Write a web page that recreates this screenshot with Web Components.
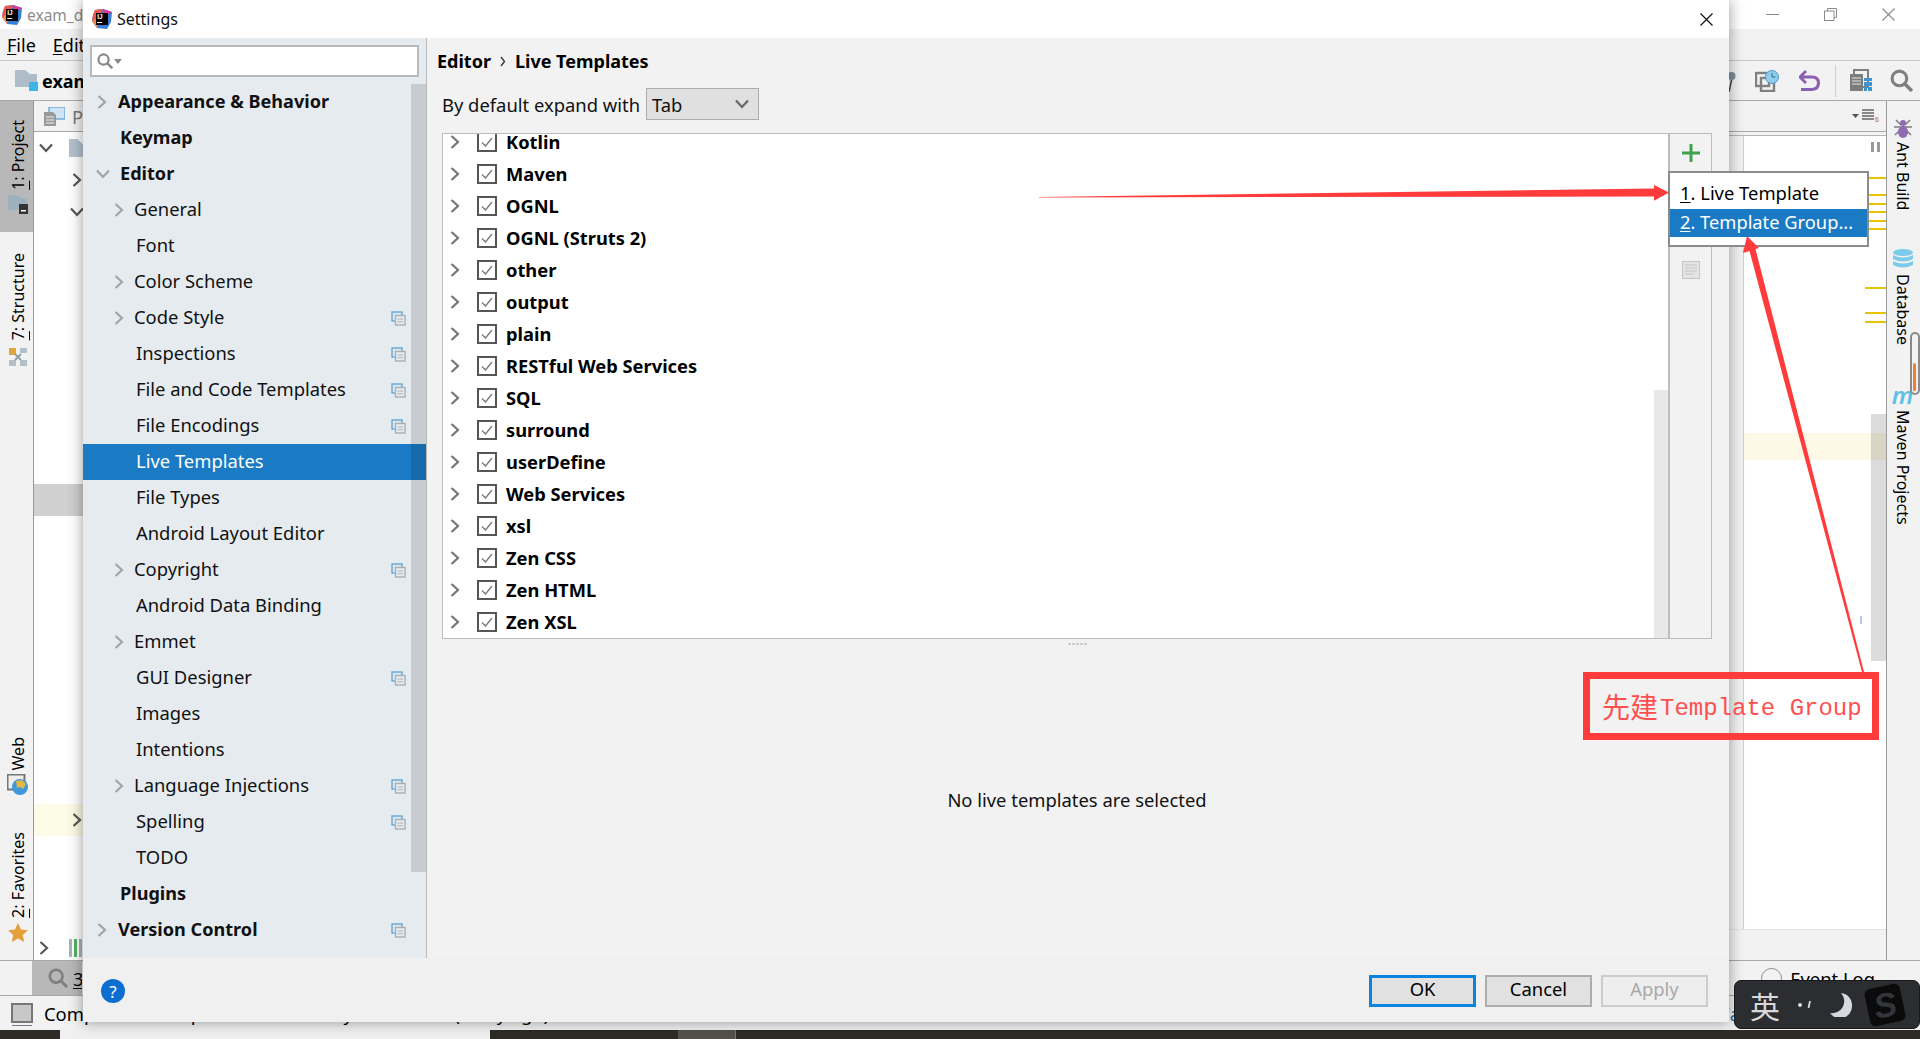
<!DOCTYPE html>
<html lang="en">
<head>
<meta charset="utf-8">
<title>Settings</title>
<style>
  html, body { margin: 0; height: 100%; overflow: hidden; background: #f2f2f2; }
  body { position: relative; width: 1920px; height: 1039px; font: 18.4px "Noto Sans", "Noto Sans CJK SC", sans-serif; color: #111; }
</style>
</head>
<body>
<ij-frame></ij-frame>
<ij-dialog></ij-dialog>
<ij-popup></ij-popup>
<ij-ime></ij-ime>
<ij-note></ij-note>

<script>
// Shared icons
const chevron = '<svg width="10" height="14" viewBox="0 0 10 14"><path d="M1.5 1L8 7L1.5 13" fill="none" stroke="currentColor" stroke-width="2.2"/></svg>';
const chevronDown = '<svg width="14" height="10" viewBox="0 0 14 10"><path d="M1 1.5L7 8L13 1.5" fill="none" stroke="currentColor" stroke-width="2.2"/></svg>';
const logo = size => `<svg width="${size}" height="${size}" viewBox="0 0 20 20">
  <path d="M3 1L11 0L20 3L19 13L15 20L5 19L0 12L1 6Z" fill="#3a7fd6"/>
  <path d="M3 1L11 0L9 7L0 12L1 6Z" fill="#f0564f"/><path d="M0 12L9 7L5 19Z" fill="#f08a3c"/>
  <path d="M11 0L20 3L12 8Z" fill="#d8399c"/>
  <rect x="4" y="4" width="12" height="12" fill="#000"/>
  <text x="5.2" y="10.4" font-size="6.5" font-weight="700" font-family="Liberation Sans" fill="#fff">IJ</text>
  <rect x="5.2" y="13" width="5" height="1" fill="#fff"/></svg>`;
const settingsBadge = `<svg width="15" height="15" viewBox="0 0 15 15">
  <rect x="1" y="1" width="10" height="9" fill="#dbe7f1" stroke="#6aa6d3" stroke-width="1.4"/>
  <rect x="4.5" y="4.5" width="9.5" height="9.5" fill="#e6ebf0" stroke="#a9afb5" stroke-width="1.4"/>
  <path d="M6.5 8h5.5M6.5 10.8h5.5" stroke="#a9afb5"/></svg>`;
const magnifier = (size, stroke) => `<svg width="${size}" height="${size}" viewBox="0 0 22 22" style="flex:none">
  <circle cx="9" cy="9" r="7" fill="none" stroke="${stroke}" stroke-width="3"/>
  <path d="M14 14L21 21" stroke="${stroke}" stroke-width="3.4"/></svg>`;

function tpl(html) {
  const template = document.createElement('template');
  template.innerHTML = html;
  return template;
}

class Base extends HTMLElement {
  constructor() {
    super();
    this.attachShadow({ mode: 'open' });
    this.shadowRoot.appendChild(this.constructor.template.content.cloneNode(true));
  }
  $(selector) {
    return this.shadowRoot.querySelector(selector);
  }
}

// Vertical tool window tab, left side reads upward and right side downward
customElements.define('ij-vtab', class IjVtab extends Base {
  static template = tpl(`
    <style>
      :host { display: flex; flex-direction: column; align-items: center; font-size: 16px; line-height: 20px; color: #000; }
      :host([active]) { background: #b8b8b8; }
      .label { writing-mode: vertical-rl; white-space: nowrap; }
      :host([side="left"]) .label { transform: rotate(180deg); }
      :host([side="right"]) { flex-direction: column-reverse; padding-right: 2px; }
    </style>
    <span class="label"><slot></slot></span>
    <slot name="icon"></slot>
  `);
});

// Project tree behind the dialog
customElements.define('ij-tree', class IjTree extends Base {
  static template = tpl(`
    <style>
      :host { display: block; overflow: hidden; flex: 1; background: #fff; }
      .row { height: 32px; display: flex; align-items: center; color: #555; }
      .sel { background: #d0d0d0; }
      .warm { background: #fbfbe6; }
      .a { margin-left: 5px; width: 30px; display: flex; }
      .b { margin-left: 38px; display: flex; }
      .c { margin-left: 36px; display: flex; }
      .f { width: 14px; height: 18px; background: #b4c2ce; clip-path: polygon(0 0, 60% 0, 100% 30%, 100% 100%, 0 100%); }
      .bars { display: flex; gap: 2px; align-items: flex-end; height: 18px; }
      .bars i { width: 3px; height: 18px; background: #a8b4bd; }
      .bars i:nth-child(2) { background: #56b25e; }
    </style>
    <div class="row"><span class="a">${chevronDown}</span><span class="f"></span></div>
    <div class="row"><span class="b">${chevron}</span></div>
    <div class="row"><span class="c">${chevronDown}</span></div>
    ${'<div class="row"></div>'.repeat(8)}
    <div class="row sel"></div>
    ${'<div class="row"></div>'.repeat(9)}
    <div class="row warm"><span class="b">${chevron}</span></div>
    ${'<div class="row"></div>'.repeat(3)}
    <div class="row"><span class="a">${chevron}</span><span class="bars"><i></i><i></i><i></i></span></div>
  `);
});

// IDE window behind the dialog
customElements.define('ij-frame', class IjFrame extends Base {
  static template = tpl(`
    <style>
      :host { display: flex; flex-direction: column; height: 1039px; background: #f2f2f2; overflow: hidden; }
      u { text-underline-offset: 2px; }
      .title { height: 29px; background: #fff; display: flex; align-items: center; padding-left: 2px; color: #8c8c8c; font-size: 15.5px; }
      .title span { margin-left: 5px; }
      .winbtns { margin-left: auto; display: flex; padding-right: 3px; }
      .winbtns div { width: 58px; height: 29px; display: flex; align-items: center; justify-content: center; }
      .menu { height: 31px; border-bottom: 1px solid #c9c9c9; display: flex; align-items: center; padding-left: 7px; gap: 17px; color: #000; font-size: 18px; }
      .tools { height: 39px; border-bottom: 1px solid #a9a9a9; display: flex; align-items: center; padding-left: 15px; }
      .tools b { margin-left: 4px; color: #000; font-size: 18px; }
      .tools .right { margin-left: auto; display: flex; align-items: center; padding-right: 7px; }
      .tools .sep { width: 1px; height: 32px; background: #cfcfcf; }
      .middle { height: 859px; display: flex; border-bottom: 1px solid #a9a9a9; }
      .lstrip { width: 33px; padding-left: 0; border-right: 1px solid #999; display: flex; flex-direction: column; }
      .lstrip ij-vtab { padding-left: 2px; }
      .rstrip { width: 33px; border-left: 1px solid #999; position: relative; }
      .work { flex: 1; display: flex; flex-direction: column; min-width: 0; }
      .pane { width: 1695px; display: flex; flex-direction: column; }
      .panehead { height: 30px; border-bottom: 1px solid #a9a9a9; display: flex; align-items: center; padding-left: 10px; color: #777; }
      .panehead span { margin-left: 7px; }
      .split { flex: 1; display: flex; min-height: 0; }
      .editor { flex: 1; display: flex; flex-direction: column; }
      .edhead { height: 30px; border-bottom: 1px solid #a9a9a9; display: flex; justify-content: flex-end; align-items: center; padding-right: 6px; }
      .edgap { height: 3px; border-bottom: 1px solid #b5b5b5; }
      .edbody { flex: 1; display: flex; border-bottom: 1px solid #e2e2e2; }
      .gutter { width: 14px; border-right: 1px solid #cfcfcf; }
      .code { flex: 1; background: #fff; position: relative; }
      .edfoot { height: 30px; }
      .warmline { position: absolute; left: 0; right: 0; top: 297px; height: 27px; background: #fdf9e6; }
      .stripe { position: absolute; right: 0; top: 278px; width: 15px; height: 247px; background: rgba(0, 0, 0, .14); }
      .mark { position: absolute; right: 0; width: 21px; height: 2px; background: #e8c400; }
      .tick { position: absolute; right: 24px; top: 480px; width: 2px; height: 8px; background: #b8c8ee; }
      .pause { position: absolute; right: 6px; top: 6px; width: 9px; height: 10px; border-left: 3px solid #9a9a9a; border-right: 3px solid #9a9a9a; box-sizing: border-box; }
      .gauge { position: absolute; right: 0; top: 231px; width: 10px; height: 63px; box-sizing: border-box; border: 2px solid #8a8a8a; border-radius: 6px; }
      .gauge i { position: absolute; left: 1px; top: 29px; width: 3px; height: 28px; background: #f08030; border-radius: 2px; }
      .m { color: #5cc0e5; font: italic 600 24px/17px "Noto Sans", sans-serif; }
      .bottom { height: 34px; border-bottom: 1px solid #a9a9a9; display: flex; align-items: center; }
      .find { margin-left: 32px; width: 50px; height: 34px; background: #b8b8b8; display: flex; align-items: center; padding-left: 16px; box-sizing: border-box; gap: 5px; color: #000; white-space: nowrap; overflow: hidden; flex: none; }
      .elog { margin-left: auto; margin-right: 45px; display: flex; align-items: center; gap: 8px; color: #000; }
      .elog i { width: 19px; height: 19px; border: 1.5px solid #8a8a8a; border-radius: 50%; }
      .status { height: 34px; display: flex; align-items: center; padding-left: 11px; color: #000; white-space: nowrap; }
      .status .box { width: 18px; height: 16px; background: #c8c8c8; border: 2px solid #777; margin-right: 11px; box-shadow: 0 3px 0 -1px #f2f2f2, 0 4px 0 -1px #777; }
      .status .n { margin-left: auto; margin-right: 180px; color: #2a66a8; }
      .task { height: 9px; display: flex; background: #2e2a26; overflow: hidden; color: #fff; font-size: 14px; line-height: 20px; }
      .task .l1 { width: 60px; }
      .task .l2 { width: 430px; background: #f0f0f0; }
      .task .l3 { margin-left: 188px; width: 57px; background: #55524e; border-right: 1px solid #777; }
      .task .clock { margin-left: 1055px; padding-top: 7px; }
    </style>
    <div class="title">${logo(20)}<span>exam_d</span>
      <div class="winbtns">
        <div><svg width="13" height="2"><rect width="13" height="1" fill="#8a8a8a"/></svg></div>
        <div><svg width="13" height="13" viewBox="0 0 13 13" fill="none" stroke="#8a8a8a"><path d="M3.5 3V.5H12.500V9.500H10"/><rect x=".5" y="3" width="9.500" height="9.500"/></svg></div>
        <div><svg width="13" height="13" viewBox="0 0 13 13" stroke="#8a8a8a" stroke-width="1.100"><path d="M.5 .5L12.500 12.500M12.500 .5L.5 12.500"/></svg></div>
      </div>
    </div>
    <div class="menu"><span><u>F</u>ile</span><span><u>E</u>dit</span></div>
    <div class="tools">
      <svg width="23" height="21" viewBox="0 0 23 21"><path d="M0 0H10L15 4H22V17H0Z" fill="#aebdc9"/><rect x="14" y="12" width="9" height="9" fill="#3db5e6"/></svg>
      <b>exam_demo</b>
      <div class="right">
        <svg width="14" height="22" viewBox="0 0 14 22"><path d="M7 22L10 8" stroke="#444" stroke-width="1.500"/><circle cx="9.500" cy="6" r="4" fill="#7e8e9a"/></svg>
        <svg style="margin-left:19px" width="24" height="22" viewBox="0 0 24 22"><rect x="1" y="3" width="13" height="13" fill="none" stroke="#808080" stroke-width="2.400"/><rect x="6" y="8" width="13" height="13" fill="none" stroke="#808080" stroke-width="2.400"/><circle cx="17" cy="7" r="6.500" fill="#8fcdea" stroke="#4b9cc9"/><path d="M17 3v4h3.500" fill="none" stroke="#2d6f95"/></svg>
        <svg style="margin-left:20px" width="21" height="22" viewBox="0 0 21 22"><path d="M7 1L1 7L7 13" fill="none" stroke="#8a5fb0" stroke-width="2.800"/><path d="M2 7H13Q19.500 7 19.500 13T13 19.500H2" fill="none" stroke="#8a5fb0" stroke-width="3"/></svg>
        <span class="sep" style="margin-left:15px"></span>
        <svg style="margin-left:14px" width="23" height="23" viewBox="0 0 23 23"><rect x="4" y="1" width="14" height="17" fill="none" stroke="#808080" stroke-width="2"/><rect x="0" y="5" width="13" height="17" fill="#7d7d7d"/><path d="M2 9h9M2 12h9M2 15h9" stroke="#e8e8e8"/><path d="M14 9h3v3h-3zM18 9h4v3h-4zM14 13h3v4h-3zM18 13h4v4h-4zM14 18h3v4h-3zM18 18h4v4h-4z" fill="#3c93cf"/></svg>
        <span style="margin-left:17px;display:flex">${magnifier(23, '#808080')}</span>
      </div>
    </div>
    <div class="middle">
      <div class="lstrip">
        <ij-vtab side="left" active style="padding-top:19px;padding-bottom:18px"><u>1</u>: Project
          <svg slot="icon" style="margin-top:5px" width="20" height="19" viewBox="0 0 20 19"><path d="M0 0H9L13 3H19V15H0Z" fill="#9fb0bd"/><rect x="11" y="9" width="9" height="10" fill="#333"/><rect x="13" y="15" width="5" height="1.500" fill="#fff"/></svg>
        </ij-vtab>
        <ij-vtab side="left" style="margin-top:21px">
          <span><u>7</u>: Structure</span>
          <svg slot="icon" style="margin-top:8px" width="18" height="18" viewBox="0 0 18 18"><rect width="7" height="7" fill="#e0a63c"/><rect x="11" width="7" height="5" fill="#b4c0c8"/><rect y="12" width="7" height="6" fill="#b4c0c8"/><rect x="11" y="12" width="7" height="6" fill="#b4c0c8"/><path d="M6 6L12 12M12 6L6 12" stroke="#8ea0ac" stroke-width="2"/></svg>
        </ij-vtab>
        <div style="flex:1"></div>
        <ij-vtab side="left">Web
          <svg slot="icon" style="margin-top:4px" width="21" height="21" viewBox="0 0 21 21"><rect x=".5" y=".5" width="17" height="15" fill="#eee" stroke="#777" stroke-width="2"/><circle cx="13" cy="13" r="8" fill="#3f97dd"/><path d="M9 7L15 6L19 10L16 15L13 13L10 14Z" fill="#e5b93c"/></svg>
        </ij-vtab>
        <ij-vtab side="left" style="margin-top:37px;padding-bottom:18px"><u>2</u>: Favorites
          <svg slot="icon" style="margin-top:5px" width="20" height="19" viewBox="0 0 20 19"><path d="M10 0L13 6.500L20 7.300L14.800 12L16.200 19L10 15.500L3.800 19L5.200 12L0 7.300L7 6.500Z" fill="#e5a03c"/></svg>
        </ij-vtab>
      </div>
      <div class="work">
        <div class="split">
          <div class="pane">
            <div class="panehead">
              <svg width="21" height="19" viewBox="0 0 21 19"><rect x="5" y="0" width="16" height="12" fill="#cfe3f2" stroke="#6aa6d3" stroke-width="1.400"/><path d="M0 5H9L12 8V19H0Z" fill="#9a9a9a"/><path d="M2 10h8M2 13h8M2 16h8" stroke="#eee"/></svg>
              <span>P</span>
            </div>
            <ij-tree></ij-tree>
          </div>
          <div class="editor">
            <div class="edhead">
              <svg width="28" height="14" viewBox="0 0 28 14"><path d="M0 5H7L3.500 9Z" fill="#555"/><path d="M10 1h12M10 4h12M10 7h12M10 10h12" stroke="#666" stroke-width="1.400"/><text x="23" y="13" font-size="7" font-family="Liberation Sans" fill="#c0641e">6</text></svg>
            </div>
            <div class="edgap"></div>
            <div class="edbody">
              <div class="gutter"></div>
              <div class="code">
                <div class="warmline"></div>
                <div class="stripe"></div>
                <i class="mark" style="top:41px"></i><i class="mark" style="top:58px"></i><i class="mark" style="top:67px"></i>
                <i class="mark" style="top:75px"></i><i class="mark" style="top:84px"></i><i class="mark" style="top:92px"></i>
                <i class="mark" style="top:151px"></i><i class="mark" style="top:176px"></i><i class="mark" style="top:185px"></i>
                <i class="tick"></i>
                <i class="pause"></i>
              </div>
            </div>
            <div class="edfoot"></div>
          </div>
        </div>
      </div>
      <div class="rstrip">
        <ij-vtab side="right" style="margin-top:17px">Ant Build
          <svg slot="icon" style="margin-bottom:4px" width="18" height="20" viewBox="0 0 18 20"><path d="M2 2L7 7M16 2L11 7M0 9H18M1 17L6 12M17 17L12 12" stroke="#7d7d7d" stroke-width="1.500"/><circle cx="9" cy="5" r="3" fill="#8f6bb3"/><ellipse cx="9" cy="14" rx="5" ry="6" fill="#8f6bb3"/></svg>
        </ij-vtab>
        <ij-vtab side="right" style="margin-top:39px">Database
          <svg slot="icon" style="margin-bottom:5px" width="20" height="20" viewBox="0 0 20 20"><g fill="#7ccbe8"><ellipse cx="10" cy="3.500" rx="10" ry="3.500"/><path d="M0 6Q10 11 20 6V10Q10 15 0 10Z"/><path d="M0 12Q10 17 20 12V16Q10 21 0 16Z"/></g></svg>
        </ij-vtab>
        <ij-vtab side="right" style="margin-top:41px">Maven Projects
          <span slot="icon" class="m" style="margin-bottom:7px">m</span>
        </ij-vtab>
        <div class="gauge"><i></i></div>
      </div>
    </div>
    <div class="bottom">
      <div class="find">${magnifier(20, '#808080')}<span><u>3</u></span></div>
      <div class="elog"><i></i><span>Event Log</span></div>
    </div>
    <div class="status"><span class="box"></span><span>Compilation completed successfully in 4s 21ms (a day ago)</span><span class="n">n/a</span></div>
    <div class="task"><div class="l1"></div><div class="l2"></div><div class="l3"></div><div class="clock">10:33</div></div>
  `);
});

// Row of the settings tree
customElements.define('ij-nav', class IjNav extends Base {
  static template = tpl(`
    <style>
      :host { display: flex; align-items: center; height: 36px; white-space: nowrap; color: #111; flex: none; }
      :host([bold]) { font-weight: 700; font-size: 18.1px; }
      :host([selected]) { background: #1a7bc4; color: #fff; }
      #arrow { display: flex; color: #a0a5aa; }
      #text { padding-bottom: 4px; }
      :host([bold]) #text { padding-bottom: 2px; }
      #badge { margin-left: auto; padding-right: 20px; display: flex; }
    </style>
    <span id="arrow"></span><span id="text"><slot></slot></span><span id="badge"></span>
  `);

  connectedCallback() {
    const level = +this.getAttribute('level') || 0;
    const arrow = this.getAttribute('arrow');
    const arrowBox = this.$('#arrow');
    if (arrow === 'right') {
      arrowBox.innerHTML = chevron;
      arrowBox.style.width = level ? '20px' : '21px';
      this.style.paddingLeft = level ? '31px' : '14px';
    } else if (arrow === 'down') {
      arrowBox.innerHTML = chevronDown;
      arrowBox.style.width = '24px';
      this.style.paddingLeft = '13px';
    } else {
      this.style.paddingLeft = level ? '53px' : '37px';
    }
    if (this.hasAttribute('badge')) this.$('#badge').innerHTML = settingsBadge;
  }
});

// Row of the template group list
customElements.define('ij-group', class IjGroup extends Base {
  static template = tpl(`
    <style>
      :host { display: flex; align-items: center; height: 32px; font-weight: 700; font-size: 18.3px; color: #000; white-space: nowrap; flex: none; }
      .arrow { display: flex; color: #757575; margin-left: 7px; width: 27px; }
      .check { width: 20px; height: 20px; margin-right: 9px; }
      .text { padding-bottom: 2px; }
    </style>
    <span class="arrow">${chevron}</span>
    <svg class="check" viewBox="0 0 20 20"><rect x="1" y="1" width="18" height="18" fill="#fff" stroke="#555" stroke-width="2"/><path d="M5 10.500L8.500 14L15 6" fill="none" stroke="#777" stroke-width="1.300"/></svg>
    <span class="text"><slot></slot></span>
  `);
});

customElements.define('ij-button', class IjButton extends Base {
  static template = tpl(`
    <style>
      :host { display: flex; align-items: center; justify-content: center; box-sizing: border-box; width: 107px; height: 32px; padding-bottom: 5px; background: #e1e1e1; border: 2px solid #adadad; color: #000; }
      :host([primary]) { border: 3px solid #0a84e0; }
      :host([disabled]) { background: #eee; border-color: #ccc; color: #a8a8a8; }
    </style>
    <slot></slot>
  `);
});

// Settings dialog
customElements.define('ij-dialog', class IjDialog extends Base {
  static template = tpl(`
    <style>
      :host { position: absolute; left: 83px; top: 0; width: 1646px; height: 1022px; display: flex; flex-direction: column; background: #f2f2f2; box-shadow: 0 0 14px rgba(0, 0, 0, .4); }
      .title { height: 38px; flex: none; background: #fff; display: flex; align-items: center; padding-left: 9px; font-size: 16px; color: #111; }
      .title span { margin-left: 5px; }
      .title svg:last-child { margin-left: auto; margin-right: 16px; }
      .body { flex: 1; display: flex; min-height: 0; }
      .side { width: 343px; flex: none; background: #e6ebf0; border-right: 1px solid #b9b9b9; display: flex; flex-direction: column; position: relative; overflow: hidden; }
      .search { margin: 7px 7px; height: 32px; box-sizing: border-box; flex: none; background: #fff; border: 2px solid #b9b9b9; display: flex; align-items: center; padding-left: 5px; gap: 1px; }
      .search i { border: 4px solid transparent; border-top: 5px solid #888; border-bottom: 0; }
      .thumb { position: absolute; right: 0; top: 46px; width: 15px; height: 788px; background: rgba(0, 0, 0, .13); }
      .content { flex: 1; min-width: 0; display: flex; flex-direction: column; padding: 0 17px 0 15px; }
      .crumb { height: 24px; margin-top: 11px; display: flex; align-items: center; font-weight: 700; font-size: 18px; color: #000; gap: 9px; margin-left: -5px; flex: none; }
      .expand { margin-top: 15px; height: 32px; display: flex; align-items: center; flex: none; }
      .select { margin-left: 6px; width: 113px; height: 32px; box-sizing: border-box; background: #e0e0e0; border: 1.500px solid #adadad; display: flex; align-items: center; justify-content: space-between; padding: 0 9px 0 5px; color: #111; }
      .select svg { color: #666; }
      .panel { margin-top: 13px; height: 506px; display: flex; flex: none; border: solid #bdbdbd; border-width: 1.500px 1.500px 1.500px; box-sizing: border-box; }
      .list { flex: 1; background: #fff; position: relative; overflow: hidden; border-right: 2px solid #bdbdbd; }
      .rows { margin-top: -8px; display: flex; flex-direction: column; }
      .track { position: absolute; right: 0; top: 256px; bottom: 0; width: 14px; background: #e8e8e8; }
      .actions { width: 41px; flex: none; display: flex; flex-direction: column; align-items: center; padding-top: 10px; }
      .actions svg:last-child { margin-top: 99px; }
      .dots { height: 4px; margin-top: 3px; flex: none; background: radial-gradient(circle, #bcbcbc 40%, transparent 55%) center / 4px 4px repeat-x; width: 21px; align-self: center; }
      .empty { flex: 1; display: flex; align-items: center; justify-content: center; color: #111; padding-bottom: 6px; }
      .foot { height: 64px; flex: none; box-sizing: border-box; background: #f0f0f0; display: flex; align-items: center; padding: 2px 21px 0 18px; gap: 9px; }
      .help { width: 24px; height: 24px; margin-right: auto; border-radius: 50%; background: #0a6fd0; color: #fff; display: flex; align-items: center; justify-content: center; font-size: 17px; }
    </style>
    <div class="title">${logo(20)}<span>Settings</span>
      <svg width="13" height="13" viewBox="0 0 13 13" stroke="#111" stroke-width="1.200"><path d="M.5 .5L12.500 12.500M12.500 .5L.5 12.500"/></svg>
    </div>
    <div class="body">
      <div class="side">
        <div class="search">
          ${magnifier(16, '#8a8a8a')}<i></i>
        </div>
        <ij-nav bold arrow="right">Appearance &amp; Behavior</ij-nav>
        <ij-nav bold>Keymap</ij-nav>
        <ij-nav bold arrow="down">Editor</ij-nav>
        <ij-nav level="1" arrow="right">General</ij-nav>
        <ij-nav level="1">Font</ij-nav>
        <ij-nav level="1" arrow="right">Color Scheme</ij-nav>
        <ij-nav level="1" arrow="right" badge>Code Style</ij-nav>
        <ij-nav level="1" badge>Inspections</ij-nav>
        <ij-nav level="1" badge>File and Code Templates</ij-nav>
        <ij-nav level="1" badge>File Encodings</ij-nav>
        <ij-nav level="1" selected>Live Templates</ij-nav>
        <ij-nav level="1">File Types</ij-nav>
        <ij-nav level="1">Android Layout Editor</ij-nav>
        <ij-nav level="1" arrow="right" badge>Copyright</ij-nav>
        <ij-nav level="1">Android Data Binding</ij-nav>
        <ij-nav level="1" arrow="right">Emmet</ij-nav>
        <ij-nav level="1" badge>GUI Designer</ij-nav>
        <ij-nav level="1">Images</ij-nav>
        <ij-nav level="1">Intentions</ij-nav>
        <ij-nav level="1" arrow="right" badge>Language Injections</ij-nav>
        <ij-nav level="1" badge>Spelling</ij-nav>
        <ij-nav level="1">TODO</ij-nav>
        <ij-nav bold>Plugins</ij-nav>
        <ij-nav bold arrow="right" badge>Version Control</ij-nav>
        <ij-nav bold arrow="right">Build, Execution, Deployment</ij-nav>
        <div class="thumb"></div>
      </div>
      <div class="content">
        <div class="crumb"><span>Editor</span><svg width="6" height="11" viewBox="0 0 6 11"><path d="M1 1L4.500 5.500L1 10" fill="none" stroke="#333" stroke-width="1.300"/></svg><span>Live Templates</span></div>
        <div class="expand"><span>By default expand with</span>
          <div class="select"><span>Tab</span>${chevronDown}</div>
        </div>
        <div class="panel">
          <div class="list">
            <div class="rows">
              <ij-group>Kotlin</ij-group>
              <ij-group>Maven</ij-group>
              <ij-group>OGNL</ij-group>
              <ij-group>OGNL (Struts 2)</ij-group>
              <ij-group>other</ij-group>
              <ij-group>output</ij-group>
              <ij-group>plain</ij-group>
              <ij-group>RESTful Web Services</ij-group>
              <ij-group>SQL</ij-group>
              <ij-group>surround</ij-group>
              <ij-group>userDefine</ij-group>
              <ij-group>Web Services</ij-group>
              <ij-group>xsl</ij-group>
              <ij-group>Zen CSS</ij-group>
              <ij-group>Zen HTML</ij-group>
              <ij-group>Zen XSL</ij-group>
            </div>
            <div class="track"></div>
          </div>
          <div class="actions">
            <svg width="18" height="18" viewBox="0 0 18 18"><path d="M9 0V18M0 9H18" stroke="#3fa34d" stroke-width="3"/></svg>
            <svg width="18" height="18" viewBox="0 0 18 18"><rect x=".5" y=".5" width="17" height="17" fill="#e4e4e4" stroke="#c4c4c4"/><path d="M3 4h12M3 7h12M3 10h12M3 13h8" stroke="#c4c4c4"/></svg>
          </div>
        </div>
        <div class="dots"></div>
        <div class="empty">No live templates are selected</div>
      </div>
    </div>
    <div class="foot">
      <div class="help">?</div>
      <ij-button primary>OK</ij-button>
      <ij-button>Cancel</ij-button>
      <ij-button disabled>Apply</ij-button>
    </div>
  `);
});

// Menu opened by the add button
customElements.define('ij-popup', class IjPopup extends Base {
  static template = tpl(`
    <style>
      :host { position: absolute; left: 1668px; top: 171px; width: 201px; height: 76px; box-sizing: border-box; background: #fff; border: 2px solid #8c8c8c; color: #000; white-space: nowrap; }
      .item { padding-left: 10px; display: flex; align-items: center; box-sizing: border-box; }
      .a { height: 36px; padding-top: 3px; }
      .b { height: 28px; padding-bottom: 4px; background: #1a7bc4; color: #fff; font-size: 18.3px; }
      u { text-underline-offset: 2px; }
    </style>
    <div class="item a"><span><u>1</u>. Live Template</span></div>
    <div class="item b"><span><u>2</u>. Template Group...</span></div>
  `);
});

// Input method bar at the corner of the screen
customElements.define('ij-ime', class IjIme extends Base {
  static template = tpl(`
    <style>
      :host { position: absolute; left: 1734px; top: 980px; width: 186px; height: 49px; box-sizing: border-box; background: #2b2d31; border: 1px solid #17181a; border-radius: 7px; display: flex; align-items: center; padding-left: 15px; color: #d8d8d8; }
      .zh { font: 30px/1 "Noto Sans CJK SC", sans-serif; }
      .dots { margin-left: 18px; margin-right: 18px; }
      .s { margin-left: 15px; width: 36px; height: 38px; border-radius: 6px; background: #0b0b0c; transform: rotate(-12deg); display: flex; align-items: center; justify-content: center; font: italic 900 34px/1 "Liberation Sans", sans-serif; color: #34353a; }
    </style>
    <span class="zh">英</span>
    <svg class="dots" width="14" height="8" viewBox="0 0 14 8"><circle cx="2" cy="4" r="2" fill="#d8d8d8"/><path d="M12 0L10.500 7" stroke="#d8d8d8" stroke-width="1.800"/></svg>
    <svg width="22" height="24" viewBox="0 0 22 24"><path d="M11 0A12 12 0 0 1 0 20A12 12 0 0 0 22 13A12 12 0 0 0 11 0Z" fill="#d8d8e0"/></svg>
    <span class="s">S</span>
  `);
});

// Red annotation drawn over the screenshot
customElements.define('ij-note', class IjNote extends Base {
  static template = tpl(`
    <style>
      :host { position: absolute; left: 0; top: 0; width: 1920px; height: 1039px; pointer-events: none; }
      svg { position: absolute; left: 0; top: 0; }
      .box { position: absolute; left: 1583px; top: 672px; width: 296px; height: 68px; box-sizing: border-box; border: 7px solid #ff3b3b; display: flex; align-items: center; padding-left: 12px; color: #ff5050; white-space: nowrap; font: 24px "Liberation Mono", "Noto Sans CJK SC", monospace; }
      .zh { font-size: 28px; }
      .en { padding-top: 5px; margin-left: 2px; }
    </style>
    <svg width="1920" height="1039" viewBox="0 0 1920 1039" fill="#ff3b3b">
      <path d="M1039 197L1654 188.500V185L1669 192.500L1654 200.700V196.500L1039 197.500Z"/>
      <path d="M1747 236L1759 248L1755.500 249L1864 672H1862L1749.500 251L1743 253Z"/>
    </svg>
    <div class="box"><span class="zh">先建</span><span class="en">Template Group</span></div>
  `);
});
</script>
</body>
</html>
